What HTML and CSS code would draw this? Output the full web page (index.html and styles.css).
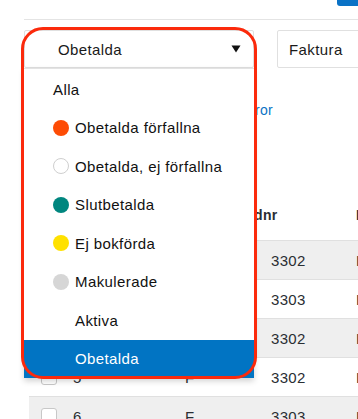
FILE: index.html
```html
<!DOCTYPE html>
<html lang="sv">
<head>
<meta charset="utf-8">
<link rel="stylesheet" href="styles.css">
</head>
<body>
<div class="page">
  <div class="topbar"><span class="topbtn"></span></div>
  <div class="filters">
    <div class="select main">
      <span class="sel-text">Obetalda</span>
      <svg class="caret" width="10" height="8" viewBox="0 0 10 8"><path d="M0.5 0.5 H9.5 L5 7.5 Z" fill="#111"/></svg>
      <ul class="menu">
        <li class="opt plain">Alla</li>
        <li class="opt"><span class="dot red"></span>Obetalda förfallna</li>
        <li class="opt"><span class="dot white"></span>Obetalda, ej förfallna</li>
        <li class="opt"><span class="dot teal"></span>Slutbetalda</li>
        <li class="opt"><span class="dot yellow"></span>Ej bokförda</li>
        <li class="opt"><span class="dot grey"></span>Makulerade</li>
        <li class="opt"><span class="dot none"></span>Aktiva</li>
        <li class="opt active"><span class="dot none"></span>Obetalda</li>
      </ul>
    </div>
    <div class="select type"><span class="sel-text">Faktura</span></div>
  </div>
  <div class="linkrow"><a class="link">Visa alla fakturor</a></div>
  <div class="table">
    <div class="thead">
      <span></span><span>Nr</span><span>Typ</span><span>Kundnr</span><span>Belopp</span>
    </div>
    <div class="row alt"><span class="cb"></span><span>1</span><span>F</span><span>3302</span><span>Lindqvist AB</span></div>
    <div class="row"><span class="cb"></span><span>2</span><span>F</span><span>3303</span><span>Lindqvist AB</span></div>
    <div class="row alt"><span class="cb"></span><span>3</span><span>F</span><span>3302</span><span>Lindqvist AB</span></div>
    <div class="row"><span class="cb"></span><span>5</span><span>F</span><span>3302</span><span>Lindqvist AB</span></div>
    <div class="row alt"><span class="cb"></span><span>6</span><span>F</span><span>3303</span><span>Lindqvist AB</span></div>
  </div>
</div>
<div class="annot"></div>
</body>
</html>
```
FILE: styles.css
```css
* { box-sizing: border-box; }
html, body { margin: 0; padding: 0; background: #fff; overflow: hidden; }
body {
  font-family: "Liberation Sans", Arial, Helvetica, sans-serif;
  color: #1a1a1a;
  width: 358px;
  height: 419px;
  position: relative;
}
.page { padding-left: 24px; }
.topbar {
  height: 20px;
  border-bottom: 1px solid #e4e4e4;
  display: flex;
  justify-content: flex-end;
  align-items: flex-start;
}
.topbtn {
  width: 21px;
  height: 6px;
  background: #0a72c6;
  border-bottom-left-radius: 3px;
}
.filters {
  margin-top: 10px;
  display: flex;
  gap: 23px;
  align-items: flex-start;
}
.select {
  flex: none;
  position: relative;
  height: 38px;
  border: 1px solid #e0e0e0;
  border-radius: 2px;
  background: #fff;
  display: flex;
  align-items: center;
  font-size: 15px;
  letter-spacing: 0.4px;
}
.select.main { width: 230px; padding-left: 33px; padding-right: 12px; justify-content: space-between; }
.select.type { width: 120px; padding-left: 11px; }
.caret { display: block; margin-top: -1px; }
.menu {
  position: absolute;
  top: 37px;
  left: -1px;
  width: 230px;
  margin: 0;
  padding: 1px 0 0;
  list-style: none;
  background: #fff;
  border-top: 1px solid #e3e3e3;
  box-shadow: 0 3px 6px rgba(0,0,0,0.18);
  z-index: 2;
}
.opt {
  height: 38.5px;
  display: flex;
  align-items: center;
  padding-left: 29px;
  gap: 6px;
  font-size: 15px;
  letter-spacing: 0.4px;
  color: #111;
}
.opt.active { background: #0174c3; color: #fff; }
.dot {
  width: 16px;
  height: 16px;
  border-radius: 50%;
  flex: none;
}
.dot.red { background: #fd4c05; }
.dot.white { background: #fff; border: 1px solid #cfcfcf; }
.dot.teal { background: #00867f; }
.dot.yellow { background: #ffe100; }
.dot.grey { background: #d6d6d6; }
.dot.none { background: transparent; }
.linkrow {
  margin-top: 32px;
  width: 249px;
  height: 20px;
  display: flex;
  justify-content: flex-end;
  align-items: center;
}
.link { color: #0a73c4; font-size: 14px; letter-spacing: 0.3px; }
.table { margin-top: 70px; margin-left: 5px; }
.thead, .row {
  display: grid;
  grid-template-columns: 44px 112px 86px 85px 1fr;
  align-items: center;
  white-space: nowrap;
  overflow: hidden;
}
.thead {
  height: 50px;
  grid-template-columns: 44px 112px 41px 130px 1fr;
  font-weight: bold;
  font-size: 14px;
  letter-spacing: 0.3px;
  color: #2a2e33;
}
.row {
  height: 39px;
  border-top: 1px solid #e0e0e0;
  font-size: 15px;
  letter-spacing: 0.3px;
  color: #2a2e33;
}
.row.alt { background: #efefef; }
.cb {
  margin-left: 12px;
  width: 16px;
  height: 16px;
  border: 1px solid #c8c8c8;
  border-radius: 3px;
  background: #fff;
}
.annot {
  position: absolute;
  left: 21px;
  top: 27px;
  width: 236px;
  height: 352px;
  border: 3px solid #fb2a0c;
  border-radius: 22px;
  z-index: 5;
  pointer-events: none;
}
```
